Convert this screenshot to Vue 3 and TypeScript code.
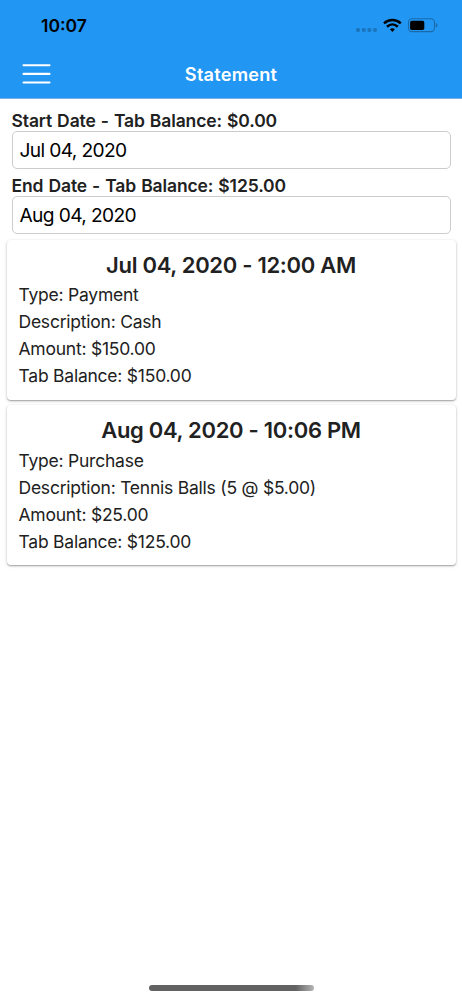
<script setup lang="ts">
interface Entry {
  id: number
  heading: string
  lines: string[]
}

const fields = [
  { id: 'start', label: 'Start Date - Tab Balance: $0.00', value: 'Jul 04, 2020' },
  { id: 'end', label: 'End Date - Tab Balance: $125.00', value: 'Aug 04, 2020' },
]

const entries: Entry[] = [
  {
    id: 1,
    heading: 'Jul 04, 2020 - 12:00 AM',
    lines: ['Type: Payment', 'Description: Cash', 'Amount: $150.00', 'Tab Balance: $150.00'],
  },
  {
    id: 2,
    heading: 'Aug 04, 2020 - 10:06 PM',
    lines: [
      'Type: Purchase',
      'Description: Tennis Balls (5 @ $5.00)',
      'Amount: $25.00',
      'Tab Balance: $125.00',
    ],
  },
]
</script>

<template>
  <div class="screen">
    <header class="header">
      <div class="status">
        <span class="time">10:07</span>
        <svg class="indicators" width="84" height="20" viewBox="0 0 84 20">
          <g fill="#1b76bf">
            <rect x="1" y="12" width="4" height="4" rx="1.4" />
            <rect x="6.8" y="12" width="4" height="4" rx="1.4" />
            <rect x="12.4" y="12" width="4" height="4" rx="1.4" />
            <rect x="18" y="12" width="4" height="4" rx="1.4" />
          </g>
          <g fill="none" stroke="#000" stroke-width="2.5">
            <path d="M29 7.4C33.8 2.9 41 2.9 45.8 7.4" />
            <path d="M32 10.7C35.2 7.8 39.6 7.8 42.8 10.7" />
          </g>
          <path d="M34.9 13.3Q37.4 11.4 39.9 13.3L37.4 15.9Z" fill="#000" />
          <rect x="53.5" y="2.8" width="26" height="12.8" rx="3.6" fill="none" stroke="#1a6aaa" stroke-width="1.1" />
          <rect x="55.1" y="4.8" width="14.2" height="9.2" rx="1.8" fill="#000" />
          <path d="M80.9 7Q82.5 7.5 82.5 9.2T80.9 11.5Z" fill="#176cae" />
        </svg>
      </div>
      <nav class="navbar">
        <button class="menu" type="button" aria-label="Menu">
          <svg width="30" height="22" viewBox="0 0 30 22">
            <path d="M2.5 2.2H28.5M2.5 10.9H28.5M2.5 19.5H28.5" stroke="#fff" stroke-width="2.1" stroke-linecap="round" />
          </svg>
        </button>
        <h1 class="title">Statement</h1>
      </nav>
    </header>

    <section class="filters">
      <div v-for="field in fields" :key="field.id" class="field">
        <div class="label">{{ field.label }}</div>
        <div class="input">{{ field.value }}</div>
      </div>
    </section>

    <main class="list">
      <article v-for="entry in entries" :key="entry.id" class="card">
        <h2 class="heading">{{ entry.heading }}</h2>
        <p v-for="line in entry.lines" :key="line" class="line">{{ line }}</p>
      </article>
    </main>

    <footer class="footer"><div class="home-bar"></div></footer>
  </div>
</template>

<style>
body {
  margin: 0;
  background: #fff;
}
</style>

<style scoped>
.screen {
  display: flex;
  flex-direction: column;
  width: 462px;
  height: 1000px;
  overflow: hidden;
  background: #fff;
  color: #212121;
  font-family: Inter, "Liberation Sans", sans-serif;
}
.header {
  box-sizing: border-box;
  height: 99px;
  flex: none;
  background: #2196f3;
  border-bottom: 1px solid #7cb3e4;
}
.status {
  display: flex;
  justify-content: space-between;
  height: 50px;
  padding: 0 23px 0 41px;
  color: #000;
}
.time {
  padding-top: 15px;
  font-size: 17.5px;
  font-weight: 600;
  line-height: 22px;
}
.indicators {
  margin-top: 16px;
}
.navbar {
  display: grid;
  grid-template-columns: 62px 1fr 62px;
  align-items: center;
  height: 48px;
}
.menu {
  display: flex;
  margin-left: 21px;
  padding: 0;
  border: 0;
  background: none;
}
.title {
  margin: 0;
  color: #fff;
  font-size: 18.2px;
  font-weight: 600;
  line-height: 24px;
  letter-spacing: 0.2px;
  text-align: center;
}
.filters {
  flex: none;
  padding: 10px 11.5px 0 11.5px;
}
.field {
  height: 65px;
}
.label {
  box-sizing: border-box;
  height: 22px;
  padding-top: 1px;
  font-size: 17.5px;
  font-weight: 600;
  line-height: 22px;
  letter-spacing: -0.12px;
  word-spacing: 0.8px;
  white-space: nowrap;
}
.input {
  box-sizing: border-box;
  height: 38px;
  padding-left: 7px;
  border: 1px solid #ccc;
  border-radius: 5px;
  color: #000;
  font-size: 19.2px;
  line-height: 36px;
  letter-spacing: -0.7px;
  word-spacing: 0.3px;
}
.list {
  display: flex;
  flex: 1;
  flex-direction: column;
  gap: 5px;
  padding: 1px 6.5px 0 6.5px;
}
.card {
  box-sizing: border-box;
  height: 160px;
  padding: 10px 12px 0;
  border-radius: 4px;
  background: #fff;
  box-shadow: 0 1px 1px rgba(0, 0, 0, 0.18), 0 1px 3px rgba(0, 0, 0, 0.26);
}
.heading {
  margin: 0;
  font-size: 22px;
  font-weight: 600;
  line-height: 31px;
  letter-spacing: -0.3px;
  text-align: center;
  white-space: nowrap;
}
.line {
  margin: 0;
  font-size: 17.5px;
  line-height: 27px;
  letter-spacing: -0.23px;
  white-space: nowrap;
}
.card:last-child .line {
  padding-top: 0.5px;
  margin-bottom: -0.5px;
}
.footer {
  display: flex;
  flex: none;
  justify-content: center;
  height: 15px;
}
.home-bar {
  width: 165px;
  height: 6px;
  border-radius: 3px;
  background: linear-gradient(90deg, #626262 0 89%, #b5b5b5);
}
</style>
